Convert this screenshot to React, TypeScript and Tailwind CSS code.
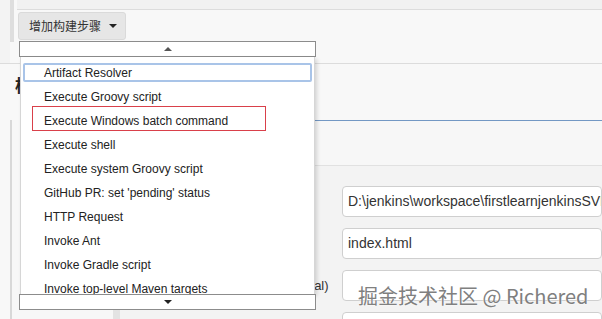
import React from 'react';

const steps = [
  'Artifact Resolver',
  'Execute Groovy script',
  'Execute Windows batch command',
  'Execute shell',
  'Execute system Groovy script',
  "GitHub PR: set 'pending' status",
  'HTTP Request',
  'Invoke Ant',
  'Invoke Gradle script',
  'Invoke top-level Maven targets',
  'Process xUnit test result report',
];

const fields = [
  { label: 'HTML directory to archive', value: 'D:\\jenkins\\workspace\\firstlearnjenkinsSVN' },
  { label: 'Index page[s]', value: 'index.html' },
  { label: 'Index page title[s] (Optional)', value: '' },
  { label: 'Report title', value: '' },
];

const StepMenu: React.FC = () => (
  <div className="absolute left-[19px] top-[41px] w-[297px] h-[269px] flex flex-col">
    {/* scroll up */}
    <div className="h-[16px] shrink-0 bg-white border border-[#8c8c8c] flex items-center justify-center">
      <div className="w-0 h-0 border-x-[4px] border-x-transparent border-b-[4px] border-b-[#555]" />
    </div>
    <div className="flex-1 min-h-0 overflow-hidden bg-white border-x border-[#d6d6d6] mx-[1px] pt-[3px] px-[2px] shadow-[2px_2px_4px_rgba(0,0,0,0.15)]">
      {steps.map((s, i) => (
        <div key={s} className="h-[24px] py-[3px]">
          <div
            className={
              i === 0
                ? 'h-[19px] flex items-center pl-[19px] border-2 border-[#a9c4e8] rounded-[2px] text-[12px] text-[#222]'
                : 'h-[19px] flex items-center pl-[19px] border-2 border-transparent text-[12px] text-[#222]'
            }
          >
            {s}
          </div>
        </div>
      ))}
    </div>
    {/* scroll down */}
    <div className="h-[16px] shrink-0 bg-white border border-[#8c8c8c] flex items-center justify-center">
      <div className="w-0 h-0 border-x-[4px] border-x-transparent border-t-[4px] border-t-[#222]" />
    </div>
    {/* annotation box */}
    <div className="absolute left-[13px] top-[65px] w-[234px] h-[25px] border border-[#d9404a]" />
  </div>
);

export default function App() {
  return (
    <div
      className="relative w-[602px] h-[319px] overflow-hidden bg-[#f8f8f8] flex flex-col text-[#333]"
      style={{ fontFamily: '"Liberation Sans", Arial, "Noto Sans CJK SC", sans-serif' }}
    >
      {/* top toolbar */}
      <div className="h-[64px] shrink-0 flex border-b border-[#dcdcdc]">
        <div className="w-[10px] bg-[#f3f3f3]" />
        <div className="w-[4px] h-[42px] bg-[#dedede]" />
        <div className="w-[3px]" />
        <div className="flex-1 flex flex-col">
          <div className="h-[10px] bg-[#f1f1f1] border-b border-[#dcdcdc]" />
          <div className="pt-[2px] pl-[1px]">
            <button className="h-[28px] w-[108px] flex items-center gap-[8px] pl-[10px] bg-[#e6e6e6] border border-[#dadada] rounded-[3px] text-[12px] text-[#333]">
              <span style={{ fontFamily: '"Noto Sans CJK SC", sans-serif' }}>增加构建步骤</span>
              <span className="w-0 h-0 border-x-[4px] border-x-transparent border-t-[4px] border-t-[#222]" />
            </button>
          </div>
        </div>
      </div>

      {/* section heading, mostly hidden by the menu */}
      <div className="h-[56px] shrink-0 pl-[15px] pt-[8px]">
        <span
          className="text-[17px] font-bold text-[#222] whitespace-nowrap"
          style={{ fontFamily: '"Noto Sans CJK SC", sans-serif' }}
        >
          构建后操作
        </span>
      </div>

      {/* post build panel */}
      <div className="flex-1 flex">
        <div className="w-[10px]" />
        <div className="flex-1 flex border-l-2 border-[#d8d8d8] bg-[#f7f7f7]">
          <div className="w-[101px]" />
          <div className="w-[7px] bg-[#e3e3e3]" />
          <div className="flex-1 flex flex-col border-t border-[#7398c4]">
            <div className="h-[45px] shrink-0 bg-[#f7f7f7] border-b border-[#e1e1e1]" />
            <div className="flex-1 bg-[#f3f3f3] pt-[20px] grid grid-cols-[212px_1fr] gap-x-[10px] gap-y-[11px] content-start">
              {fields.map((f) => (
                <React.Fragment key={f.label}>
                  <div className="h-[31px] flex items-center pl-[46px] text-[13px] text-[#333] whitespace-nowrap">
                    {f.label}
                  </div>
                  <div className="h-[31px] bg-white border border-[#cfcfcf] rounded-[4px] flex items-center pl-[5px] text-[14px] text-[#333] whitespace-nowrap overflow-hidden">
                    {f.value}
                  </div>
                </React.Fragment>
              ))}
            </div>
          </div>
        </div>
      </div>

      <StepMenu />

      {/* watermark */}
      <div
        className="absolute left-[358px] top-[281px] text-[20px] text-[#808080] whitespace-nowrap [text-shadow:0_0_2px_#fff,0_0_1px_#fff]"
        style={{ fontFamily: '"Noto Sans CJK SC", sans-serif' }}
      >
        掘金技术社区 @ Richered
      </div>
    </div>
  );
}
